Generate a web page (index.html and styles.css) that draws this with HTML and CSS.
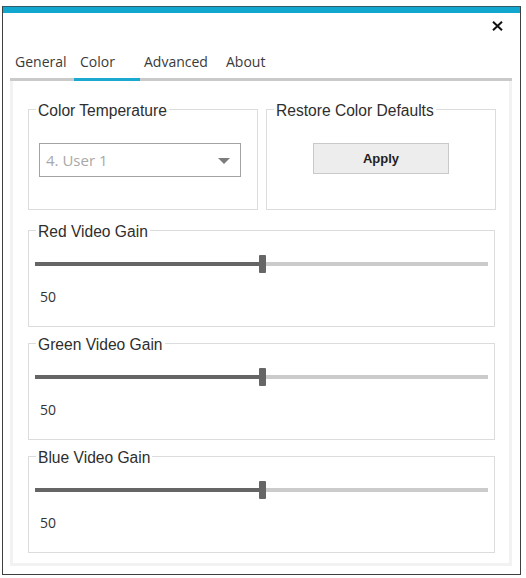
FILE: index.html
```html
<!DOCTYPE html>
<html lang="en">
<head>
<meta charset="utf-8">
<title>Color</title>
<link rel="stylesheet" href="styles.css">
</head>
<body>
<div class="window">
  <div class="accent"></div>
  <div class="titlebar">
    <span class="close" aria-label="Close">
      <svg width="11" height="10" viewBox="0 0 11 10"><path d="M1 0.8 L10 9.2 M10 0.8 L1 9.2" stroke="#111" stroke-width="2" fill="none"/></svg>
    </span>
  </div>
  <nav class="tabs">
    <span class="tab t-general">General</span>
    <span class="tab t-color active">Color</span>
    <span class="tab t-advanced">Advanced</span>
    <span class="tab t-about">About</span>
  </nav>
  <div class="panel">
    <div class="row">
      <fieldset class="group half">
        <legend>Color Temperature</legend>
        <div class="select">
          <span class="select-text">4. User 1</span>
          <span class="arrow"></span>
        </div>
      </fieldset>
      <fieldset class="group half">
        <legend>Restore Color Defaults</legend>
        <div class="apply">Apply</div>
      </fieldset>
    </div>
    <fieldset class="group gain">
      <legend>Red Video Gain</legend>
      <div class="slider">
        <span class="fill" style="width: calc(50% - 3px)"></span>
        <span class="thumb"></span>
        <span class="rest"></span>
      </div>
      <div class="value">50</div>
    </fieldset>
    <fieldset class="group gain">
      <legend>Green Video Gain</legend>
      <div class="slider">
        <span class="fill" style="width: calc(50% - 3px)"></span>
        <span class="thumb"></span>
        <span class="rest"></span>
      </div>
      <div class="value">50</div>
    </fieldset>
    <fieldset class="group gain">
      <legend>Blue Video Gain</legend>
      <div class="slider">
        <span class="fill" style="width: calc(50% - 3px)"></span>
        <span class="thumb"></span>
        <span class="rest"></span>
      </div>
      <div class="value">50</div>
    </fieldset>
  </div>
</div>
</body>
</html>
```

FILE: styles.css
```css
* { box-sizing: border-box; }
html, body { margin: 0; padding: 0; background: #ffffff; }
body { font-family: "Open Sans", "Liberation Sans", sans-serif; color: #333; }

.window {
  margin: 6px 0 0 2px;
  width: 519px;
  height: 569px;
  border: 1px solid #3f3f3f;
  border-top-color: #2d5c6a;
  background: #fff;
  display: flex;
  flex-direction: column;
}
.accent { height: 6px; background: #12a7cf; }

.titlebar {
  height: 32px;
  display: flex;
  justify-content: flex-end;
  padding: 8px 17px 0 0;
}
.close { display: block; width: 11px; height: 10px; line-height: 0; }

.tabs {
  display: flex;
  margin: 0 8px 0 7px;
  border-bottom: 3px solid #cacaca;
  height: 36px;
  align-items: flex-end;
}
.tab {
  font-size: 14px;
  line-height: 20px;
  padding: 0 0 6px 5px;
  color: #3a3a3a;
  white-space: nowrap;
}
.t-general { width: 64px; }
.t-color { width: 66px; padding-left: 6px; }
.t-advanced { width: 82px; padding-left: 4px; }
.t-about { width: 60px; padding-left: 4px; }
.tab.active {
  border-bottom: 3px solid #1ba9cf;
  margin-bottom: -3px;
  padding-bottom: 6px;
}

.panel {
  margin: 0 8px 0 7px;
  height: 485px;
  border: 3px solid #f2f2f2;
  border-top: none;
  padding: 19px 13px 0 15px;
}

.row { display: flex; gap: 8px; }

.group {
  margin: 0;
  padding: 0;
  min-width: 0;
  border: 1px solid #dcdcdc;
}
.group legend {
  font-family: "Liberation Sans", Arial, sans-serif;
  font-size: 15.6px;
  line-height: 15px;
  padding: 3px 2px 0 2px;
  color: #2e2e2e;
  margin-left: 7px;
}
.half { width: 230px; padding-bottom: 31px; }

.select {
  margin: 25px 0 0 10px;
  width: 202px;
  height: 34px;
  border: 1px solid #a3a3a3;
  display: flex;
  align-items: center;
  justify-content: space-between;
  padding: 0 10px 0 6px;
}
.select-text {
  font-size: 15px;
  color: #a8a8a8;
  line-height: 20px;
}
.arrow {
  width: 0; height: 0;
  border-left: 6.5px solid transparent;
  border-right: 6.5px solid transparent;
  border-top: 6px solid #7c7c7c;
  margin-top: 1px;
}

.apply {
  margin: 25px auto 4px;
  width: 136px;
  height: 31px;
  background: #ededed;
  border: 1px solid #c9c9c9;
  display: flex;
  align-items: center;
  justify-content: center;
  font-family: "Liberation Sans", Arial, sans-serif;
  font-weight: bold;
  font-size: 13px;
  color: #1e1e1e;
}

.gain { width: 467px; margin-top: 7px; padding: 0 0 20px 0; }
.row + .gain { margin-top: 11px; }

.slider {
  margin: 16px 6px 0 6px;
  height: 18px;
  display: flex;
  align-items: center;
}
.fill { height: 4px; background: #656565; flex: none; }
.thumb { width: 7px; height: 18px; background: #666; border-radius: 1px; flex: none; }
.rest { height: 4px; background: #cbcbcb; flex: 1; }

.value {
  margin: 15px 0 0 11px;
  font-size: 14px;
  line-height: 18px;
  color: #333;
}
```
